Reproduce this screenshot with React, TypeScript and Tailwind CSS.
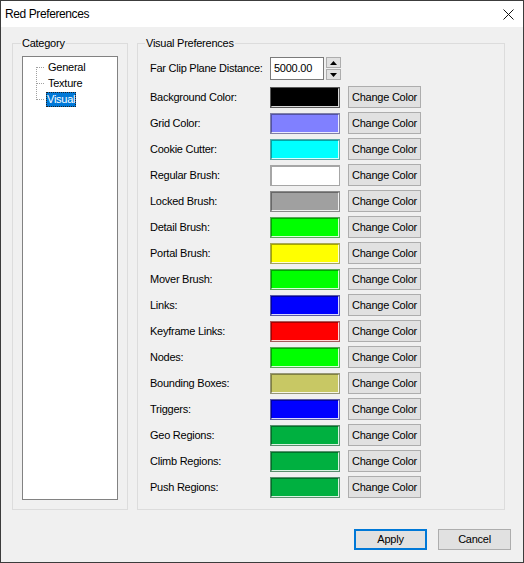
const font = { fontFamily: '"Liberation Sans", Arial, sans-serif' }

const colorRows: { label: string; color: string }[] = [
  { label: 'Background Color:', color: '#000000' },
  { label: 'Grid Color:', color: '#8080ff' },
  { label: 'Cookie Cutter:', color: '#00ffff' },
  { label: 'Regular Brush:', color: '#ffffff' },
  { label: 'Locked Brush:', color: '#a0a0a0' },
  { label: 'Detail Brush:', color: '#00ff00' },
  { label: 'Portal Brush:', color: '#ffff00' },
  { label: 'Mover Brush:', color: '#00ff00' },
  { label: 'Links:', color: '#0000ff' },
  { label: 'Keyframe Links:', color: '#ff0000' },
  { label: 'Nodes:', color: '#00ff00' },
  { label: 'Bounding Boxes:', color: '#c8c864' },
  { label: 'Triggers:', color: '#0000ff' },
  { label: 'Geo Regions:', color: '#00b040' },
  { label: 'Climb Regions:', color: '#00b040' },
  { label: 'Push Regions:', color: '#00b040' },
]

function WinButton({ children, primary, width }: { children: React.ReactNode; primary?: boolean; width: string }) {
  return (
    <button
      className={`${width} h-full flex items-center justify-center bg-[#e1e1e1] text-black text-[11px] tracking-[-0.25px] leading-none ${
        primary
          ? 'border border-[#0078d7] shadow-[inset_0_0_0_1px_#0078d7]'
          : 'border border-[#adadad]'
      }`}
      style={font}
    >
      {children}
    </button>
  )
}

export default function App() {
  return (
    <div
      className="w-[524px] h-[563px] flex flex-col border border-[#3c3c3c] bg-[#f0f0f0] text-black text-[11px] tracking-[-0.25px]"
      style={font}
    >
      {/* title bar */}
      <div className="h-[26px] bg-white flex items-center justify-between pl-[4px] pr-[9px] shrink-0">
        <span className="text-[12px] tracking-[-0.4px]">Red Preferences</span>
        <svg width="11" height="11" viewBox="0 0 11 11">
          <path d="M0.5 0.5 L10.5 10.5 M10.5 0.5 L0.5 10.5" stroke="#111" strokeWidth="1" />
        </svg>
      </div>

      <div className="flex-1 flex flex-col px-[11px] pt-[10px] pb-[12px]">
        <div className="flex gap-[9px] h-[473px]">
          {/* category */}
          <fieldset className="w-[116px] h-full border border-[#dcdcdc] flex flex-col">
            <legend className="ml-[8px] px-[1px] leading-[13px]">Category</legend>
            <div className="flex-1 flex flex-col px-[9px] pb-[9px]">
              <div className="mt-[6px] flex-1 bg-white border border-[#828282] pt-[2px]">
                <div className="flex">
                  <svg width="23" height="48" viewBox="0 0 23 48" className="shrink-0">
                    <g stroke="#a0a0a0" strokeWidth="1" strokeDasharray="1 1">
                      <path d="M13.5 8 V41" />
                      <path d="M14 8.5 H22" />
                      <path d="M14 24.5 H22" />
                      <path d="M14 40.5 H22" />
                    </g>
                  </svg>
                  <div className="flex flex-col">
                    <div className="h-[16px] flex items-center px-[2px]">General</div>
                    <div className="h-[16px] flex items-center px-[2px]">Texture</div>
                    <div className="h-[16px] flex items-center">
                      <span className="h-[15px] flex items-center px-[1px] bg-[#0078d7] text-white outline outline-1 outline-dotted outline-[#222] -outline-offset-1">
                        Visual
                      </span>
                    </div>
                  </div>
                </div>
              </div>
            </div>
          </fieldset>

          {/* visual preferences */}
          <fieldset className="w-[368px] h-full border border-[#dcdcdc] flex flex-col">
            <legend className="ml-[7px] px-[1px] leading-[13px]">Visual Preferences</legend>
            <div className="pl-[12px] flex flex-col">
              <div className="mt-[7px] flex items-center h-[23px]">
                <span className="w-[120px]">Far Clip Plane Distance:</span>
                <div className="w-[54px] h-[23px] bg-white border border-[#7a7a7a] flex items-center pl-[3px]">
                  5000.00
                </div>
                <div className="ml-[2px] w-[15px] h-[23px] flex flex-col gap-[1px]">
                  <div className="flex-1 bg-[#e1e1e1] border border-[#adadad] flex items-center justify-center">
                    <svg width="7" height="4" viewBox="0 0 7 4">
                      <path d="M0 4 L3.5 0 L7 4 Z" fill="#000" />
                    </svg>
                  </div>
                  <div className="flex-1 bg-[#e1e1e1] border border-[#adadad] flex items-center justify-center">
                    <svg width="7" height="4" viewBox="0 0 7 4">
                      <path d="M0 0 L3.5 4 L7 0 Z" fill="#000" />
                    </svg>
                  </div>
                </div>
              </div>

              <div className="mt-[4px] flex flex-col">
                {colorRows.map(row => (
                  <div key={row.label} className="h-[26px] flex items-center">
                    <span className="w-[120px]">{row.label}</span>
                    <div
                      className="w-[70px] h-[21px] border border-[#808080]/70 shadow-[inset_1px_1px_0_rgba(0,0,0,0.35),inset_-1px_-1px_0_rgba(255,255,255,0.85)]"
                      style={{ backgroundColor: row.color }}
                    />
                    <div className="ml-[8px] h-[22px] flex">
                      <WinButton width="w-[73px]">Change Color</WinButton>
                    </div>
                  </div>
                ))}
              </div>
            </div>
          </fieldset>
        </div>

        {/* dialog buttons */}
        <div className="mt-[19px] flex justify-end gap-[11px] pr-[1px]">
          <div className="h-[21px] flex">
            <WinButton primary width="w-[73px]">Apply</WinButton>
          </div>
          <div className="h-[21px] flex">
            <WinButton width="w-[73px]">Cancel</WinButton>
          </div>
        </div>
      </div>
    </div>
  )
}
